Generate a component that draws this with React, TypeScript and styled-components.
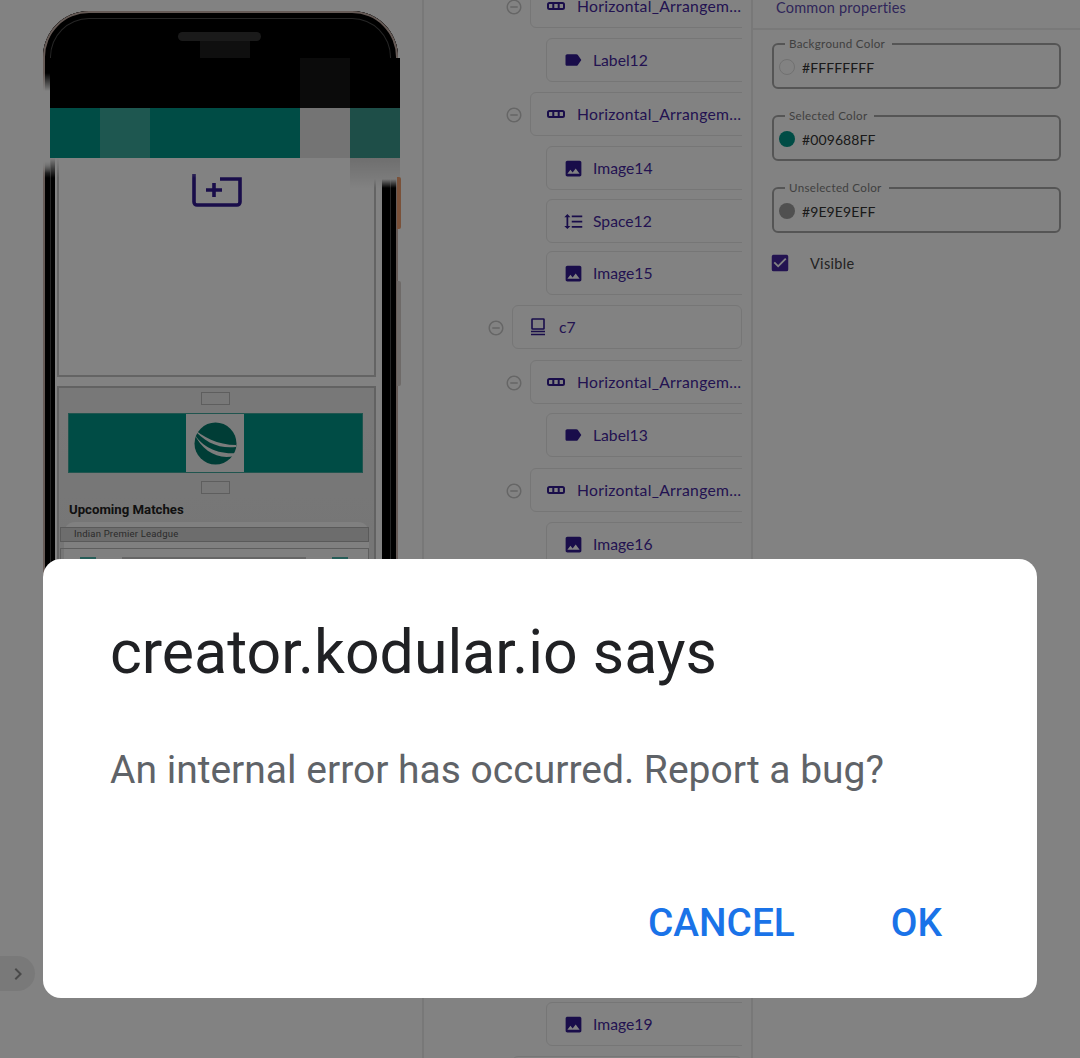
import React from "react";
import styled, { createGlobalStyle } from "styled-components";
import { MdLabel, MdImage, MdFormatLineSpacing, MdRemoveCircleOutline, MdCheckBox, MdChevronRight } from "react-icons/md";

const Global = createGlobalStyle`
  html, body { margin: 0; padding: 0; width: 1080px; height: 1058px; overflow: hidden; background: #fff; }
  #root { width: 1080px; height: 1058px; }
`;

const Page = styled.div`
  position: relative;
  width: 1080px;
  height: 1058px;
  overflow: hidden;
  display: grid;
  grid-template-columns: 422px 331px 327px;
  background: #fff;
  font-family: "Lato", "Open Sans", sans-serif;
`;

/* ---------- phone preview ---------- */
const PreviewColumn = styled.section`
  padding: 11px 0 0 43px;
`;

const Phone = styled.div`
  position: relative;
  box-sizing: border-box;
  width: 355px;
  height: 730px;
  padding: 0 12px 0 14px;
  border-radius: 46px 46px 40px 40px;
  background: linear-gradient(#000 147px, #fff 147px);
  box-shadow:
    inset 0 0 0 2px #c9b3ab,
    inset 0 0 0 7px #000,
    inset 0 0 0 8px #4a4a4a,
    inset 0 0 0 12px #000;
`;

const EarBand = styled.div`
  height: 147px;
  display: flex;
  flex-direction: column;
  align-items: center;
  padding-top: 21px;
  box-sizing: border-box;
`;

const Speaker = styled.div`
  width: 83px;
  height: 9px;
  margin-left: -4px;
  border-radius: 5px;
  background: #343434;
`;

const SensorBlock = styled.div`
  width: 50px;
  height: 17px;
  margin-left: 7px;
  background: #1e1e1e;
`;

const Mosaic = styled.div`
  position: absolute;
  left: 7px;
  top: 47px;
  width: 350px;
  display: grid;
  grid-template-columns: repeat(7, 50px);
  grid-auto-rows: 50px;
`;

const MosaicCell = styled.div<{ $color: string }>`
  background: ${(p) => p.$color};
`;

const FadeBlock = styled.div`
  position: absolute;
  left: 307px;
  top: 147px;
  width: 50px;
  height: 30px;
  background: linear-gradient(#d8d8d8, #f2f2f2 70%, #ffffff00);
`;

const LeftBlur = styled.div`
  position: absolute;
  left: -1px;
  top: 62px;
  width: 8px;
  height: 100px;
  background: linear-gradient(#ffffff00, #fff 18%, #fff 88%, #ffffff00);
`;

const RailFade = styled.div`
  position: absolute;
  left: 0;
  top: 147px;
  width: 355px;
  height: 20px;
  background: linear-gradient(#fff, #ffffff00);
`;

const SideKey = styled.div<{ $top: number; $height: number; $color: string }>`
  position: absolute;
  right: -3px;
  top: ${(p) => p.$top}px;
  width: 4px;
  height: ${(p) => p.$height}px;
  border-radius: 0 2px 2px 0;
  background: ${(p) => p.$color};
`;

const Screen = styled.div`
  width: 329px;
  box-sizing: border-box;
  padding-right: 6px;
  border-right: 4px solid #000;
  height: 550px;
`;

const BlankPanel = styled.div`
  position: relative;
  box-sizing: border-box;
  height: 219px;
  border: 2px solid #c4c4c4;
  border-top: 0;
  display: flex;
  justify-content: center;
  padding: 16px 0 0;
`;

const ContentPanel = styled.div`
  box-sizing: border-box;
  margin-top: 9px;
  height: 360px;
  border: 2px solid #c0c0c0;
  background: linear-gradient(#ececec, #e2e2e2);
  display: flex;
  flex-direction: column;
  align-items: center;
  padding: 4px 0 0;
`;

const SpacerBox = styled.div`
  flex: none;
  width: 29px;
  height: 13px;
  margin-left: -2px;
  border: 1.5px solid #b8b8b8;
  box-sizing: border-box;
`;

const Banner = styled.div`
  flex: none;
  width: 295px;
  height: 60px;
  margin: 8px 0 8px -2px;
  box-sizing: border-box;
  border: 1px solid #3fa89c;
  background: #009688;
  display: flex;
  justify-content: center;
`;

const LogoTile = styled.div`
  width: 58px;
  margin-left: -2px;
  background: #f3f3f3;
  display: flex;
  align-items: center;
  justify-content: center;
`;

const SectionTitle = styled.div`
  align-self: flex-start;
  margin: 8px 0 0 10px;
  font: 700 13.2px/16px "Roboto", sans-serif;
  color: #222;
`;

const MatchCard = styled.div`
  align-self: stretch;
  margin: 4px 5px 0 5px;
  padding-top: 5px;
  border-radius: 11px 11px 0 0;
  background: #fbfbfb;
`;

const LeagueBar = styled.div`
  margin: 0 0 0 -4px;
  box-sizing: border-box;
  height: 15px;
  padding-left: 13px;
  border: 1.5px solid #b0b0b0;
  background: #d6d6d6;
  font: 400 9.5px/12px "Roboto", sans-serif;
  letter-spacing: 0.2px;
  color: #555;
`;

const FixtureRow = styled.div`
  margin: 6px 0 0 -4px;
  box-sizing: border-box;
  height: 60px;
  border: 1.5px solid #b8b8b8;
  display: flex;
  align-items: flex-start;
  padding: 8px 20px 0 19px;
  gap: 26px;
`;

const TeamBadge = styled.div`
  flex: none;
  width: 16px;
  height: 20px;
  background: #4db6ac;
`;

const FixtureBar = styled.div`
  flex: 1;
  height: 12px;
  background: #c8c8c8;
`;

const DrawerTab = styled.button`
  position: absolute;
  left: 0;
  top: 956px;
  width: 35px;
  height: 35px;
  padding: 0;
  border: 0;
  border-radius: 0 18px 18px 0;
  background: #eee;
  color: #8f8f8f;
  font-size: 24px;
  display: flex;
  align-items: center;
  justify-content: center;
`;

/* ---------- component tree ---------- */
const TreeColumn = styled.section`
  border-left: 2px solid #ececec;
  border-right: 2px solid #ececec;
  box-sizing: border-box;
  padding-right: 9px;
  overflow: hidden;
`;

const TreeList = styled.div`
  display: flex;
  flex-direction: column;
  margin-top: -16px;
  overflow: hidden;
`;

const TreeRow = styled.div<{ $level: number; $top: number }>`
  position: relative;
  flex: none;
  box-sizing: border-box;
  height: 44px;
  margin-top: ${(p) => p.$top}px;
  margin-left: ${(p) => 88 + p.$level * 18 - (p.$level === 2 ? 2 : 0)}px;
  margin-right: ${(p) => (p.$level === 0 ? 0 : -12)}px;
  padding-left: 19px;
  border: 1.5px solid #e8e8e8;
  border-radius: 6px;
  display: flex;
  align-items: center;
  color: #4527a0;
  font-size: 15.7px;
  white-space: nowrap;
`;

const Collapse = styled.span`
  position: absolute;
  left: -26px;
  top: 4px;
  font-size: 18px;
  line-height: 0;
  margin-top: 9px;
  color: #c8c8c8;
  display: flex;
  align-items: center;
`;

const IconSlot = styled.span`
  flex: none;
  width: 27px;
  display: flex;
  align-items: center;
  color: #311b92;
  font-size: 18px;
  svg { margin-left: -3px; }
`;

const RowName = styled.span<{ $clip: boolean }>`
  display: block;
  ${(p) => (p.$clip ? "width: 166px; overflow: hidden; text-overflow: ellipsis; letter-spacing: 0.3px;" : "")}
`;

/* ---------- properties ---------- */
const PropsColumn = styled.section`
  padding: 0 19px 0 0;
`;

const PropsHeader = styled.div`
  box-sizing: border-box;
  height: 30px;
  margin-right: -19px;
  padding: 0 0 0 23px;
  border-bottom: 2px solid #eee;
  font-size: 14.5px;
  line-height: 15px;
  color: #5e4bb0;
  letter-spacing: 0.2px;
`;

const ColorField = styled.fieldset`
  box-sizing: border-box;
  height: 53px;
  margin: 0 0 19px 19px;
  padding: 0 0 4px 5px;
  border: 2px solid #a8a8a8;
  border-radius: 6px;
  display: flex;
  align-items: center;
  gap: 7px;
  &:first-of-type { margin-top: 6px; }
`;

const FieldLegend = styled.legend`
  margin-left: 6px;
  padding: 0 7px 0 4px;
  font-size: 11.6px;
  line-height: 15px;
  color: #7e7e7e;
  letter-spacing: 0.3px;
`;

const Swatch = styled.span<{ $color: string; $outline?: boolean }>`
  flex: none;
  width: 16px;
  height: 16px;
  border-radius: 50%;
  background: ${(p) => p.$color};
  box-sizing: border-box;
  ${(p) => (p.$outline ? "border: 1.5px solid #ddd;" : "")}
`;

const HexValue = styled.span`
  font-size: 14px;
  color: #333;
  letter-spacing: 0.1px;
`;

const VisibleRow = styled.label`
  display: flex;
  align-items: center;
  margin: 0 0 0 18px;
  height: 22px;
  font-size: 14.5px;
  letter-spacing: 0.3px;
  color: #444;
  gap: 19px;
`;

const CheckIcon = styled.span`
  font-size: 22px;
  line-height: 0;
  color: #4527a0;
  margin-left: -2px;
`;

/* ---------- dialog ---------- */
const Scrim = styled.div`
  position: absolute;
  inset: 0;
  background: rgba(0, 0, 0, 0.49);
`;

const Dialog = styled.div`
  position: absolute;
  left: 43px;
  top: 559px;
  width: 994px;
  height: 439px;
  box-sizing: border-box;
  padding: 58px 67px 0;
  background: #fff;
  border-radius: 18px;
  font-family: "Roboto", sans-serif;
  display: flex;
  flex-direction: column;
`;

const DialogTitle = styled.h2`
  margin: 0;
  font-size: 60.8px;
  line-height: 72px;
  font-weight: 400;
  color: #202124;
`;

const DialogBody = styled.p`
  margin: 56px 0 0;
  font-size: 39px;
  line-height: 50px;
  color: #5f6368;
`;

const DialogActions = styled.div`
  margin-top: auto;
  margin-bottom: 50px;
  display: flex;
  justify-content: flex-end;
  gap: 96px;
  padding-right: 28px;
`;

const DialogButton = styled.button`
  padding: 0;
  border: 0;
  background: none;
  font: 500 38.8px/50px "Roboto", sans-serif;
  color: #1a73e8;
`;

/* ---------- drawings ---------- */
const ArrangementIcon = () => (
  <svg width="18" height="18" viewBox="0 0 18 18" fill="none" stroke="currentColor" strokeWidth="2">
    <rect x="1" y="6" width="16" height="6" rx="1.5" />
    <path d="M6.3 6v6M11.7 6v6" />
  </svg>
);

const CardIcon = () => (
  <svg width="18" height="18" viewBox="0 0 18 18" fill="none" stroke="currentColor" strokeWidth="1.6">
    <rect x="3" y="1" width="12" height="10" rx="0.5" />
    <path d="M2 13.5h14M2 16.5h14" />
  </svg>
);

const AddTabIcon = () => (
  <svg width="50" height="34" viewBox="0 0 50 34" fill="none" stroke="#311b92" strokeWidth="3.6">
    <path d="M2 0v28a3 3 0 0 0 3 3h40a3 3 0 0 0 3-3V5H28" />
    <path d="M22 9v14M14 16h16" strokeWidth="3.6" />
  </svg>
);

const GlobeLogo = () => (
  <svg width="50" height="48" viewBox="0 0 50 48">
    <circle cx="25.5" cy="24.5" r="21" fill="#00796b" />
    <path d="M2 8 C12 18 28 26 46 26 L46 28 C30 30 14 24 2 8Z" fill="#f3f3f3" />
    <path d="M4 14 C10 26 26 36 47 34 L44 37 C28 41 12 32 4 14Z" fill="#f3f3f3" />
  </svg>
);

type Kind = "arrange" | "label" | "image" | "space" | "card";
type Item = { name: string; level: number; kind: Kind; top: number };

const HA = "Horizontal_Arrangements";

const items: Item[] = [
  { name: HA, level: 1, kind: "arrange", top: 0 },
  { name: "Label12", level: 2, kind: "label", top: 10 },
  { name: HA, level: 1, kind: "arrange", top: 10 },
  { name: "Image14", level: 2, kind: "image", top: 10 },
  { name: "Space12", level: 2, kind: "space", top: 9 },
  { name: "Image15", level: 2, kind: "image", top: 8 },
  { name: "c7", level: 0, kind: "card", top: 10 },
  { name: HA, level: 1, kind: "arrange", top: 11 },
  { name: "Label13", level: 2, kind: "label", top: 9 },
  { name: HA, level: 1, kind: "arrange", top: 11 },
  { name: "Image16", level: 2, kind: "image", top: 10 },
  { name: "Space13", level: 2, kind: "space", top: 9 },
  { name: "Image17", level: 2, kind: "image", top: 9 },
  { name: "c8", level: 0, kind: "card", top: 10 },
  { name: HA, level: 1, kind: "arrange", top: 10 },
  { name: "Label14", level: 2, kind: "label", top: 9 },
  { name: HA, level: 1, kind: "arrange", top: 10 },
  { name: "Image18", level: 2, kind: "image", top: 9 },
  { name: "Space14", level: 2, kind: "space", top: 9 },
  { name: "Image19", level: 2, kind: "image", top: 9 },
  { name: "c9", level: 0, kind: "card", top: 10 },
];

const iconFor = (k: Kind) => {
  switch (k) {
    case "arrange": return <ArrangementIcon />;
    case "label": return <MdLabel size={20} />;
    case "image": return <MdImage size={21} />;
    case "space": return <MdFormatLineSpacing size={21} />;
    default: return <CardIcon />;
  }
};

const mosaic = [
  "#000", "#000", "#000", "#000", "#000", "#161616", "#000",
  "#009688", "#3cab9e", "#009688", "#009688", "#009688", "#e4e4e4", "#3c9a8e",
];

const fields = [
  { label: "Background Color", hex: "#FFFFFFFF", color: "#fff", outline: true },
  { label: "Selected Color", hex: "#009688FF", color: "#009688" },
  { label: "Unselected Color", hex: "#9E9E9EFF", color: "#9e9e9e" },
];

export default function App() {
  return (
    <Page>
      <Global />
      <PreviewColumn>
        <Phone>
          <EarBand>
            <Speaker />
            <SensorBlock />
          </EarBand>
          <Screen>
            <BlankPanel><AddTabIcon /></BlankPanel>
            <ContentPanel>
              <SpacerBox />
              <Banner>
                <LogoTile><GlobeLogo /></LogoTile>
              </Banner>
              <SpacerBox />
              <SectionTitle>Upcoming Matches</SectionTitle>
              <MatchCard>
                <LeagueBar>Indian Premier Leadgue</LeagueBar>
                <FixtureRow>
                  <TeamBadge />
                  <FixtureBar />
                  <TeamBadge />
                </FixtureRow>
              </MatchCard>
            </ContentPanel>
          </Screen>
          <RailFade />
          <LeftBlur />
          <Mosaic>
            {mosaic.map((c, i) => <MosaicCell key={i} $color={c} />)}
          </Mosaic>
          <FadeBlock />
          <SideKey $top={166} $height={52} $color="#f0a070" />
          <SideKey $top={270} $height={105} $color="#d8d0cc" />
        </Phone>
      </PreviewColumn>

      <TreeColumn>
        <TreeList>
          {items.map((it, i) => (
            <TreeRow key={i} $level={it.level} $top={it.top}>
              {it.level < 2 && <Collapse><MdRemoveCircleOutline /></Collapse>}
              <IconSlot>{iconFor(it.kind)}</IconSlot>
              <RowName $clip={it.name === HA}>{it.name}</RowName>
            </TreeRow>
          ))}
        </TreeList>
      </TreeColumn>

      <PropsColumn>
        <PropsHeader>Common properties</PropsHeader>
        {fields.map((f) => (
          <ColorField key={f.label}>
            <FieldLegend>{f.label}</FieldLegend>
            <Swatch $color={f.color} $outline={f.outline} />
            <HexValue>{f.hex}</HexValue>
          </ColorField>
        ))}
        <VisibleRow>
          <CheckIcon><MdCheckBox /></CheckIcon>
          Visible
        </VisibleRow>
      </PropsColumn>

      <DrawerTab aria-label="Expand"><MdChevronRight /></DrawerTab>

      <Scrim />
      <Dialog>
        <DialogTitle>creator.kodular.io says</DialogTitle>
        <DialogBody>An internal error has occurred. Report a bug?</DialogBody>
        <DialogActions>
          <DialogButton>CANCEL</DialogButton>
          <DialogButton>OK</DialogButton>
        </DialogActions>
      </Dialog>
    </Page>
  );
}
